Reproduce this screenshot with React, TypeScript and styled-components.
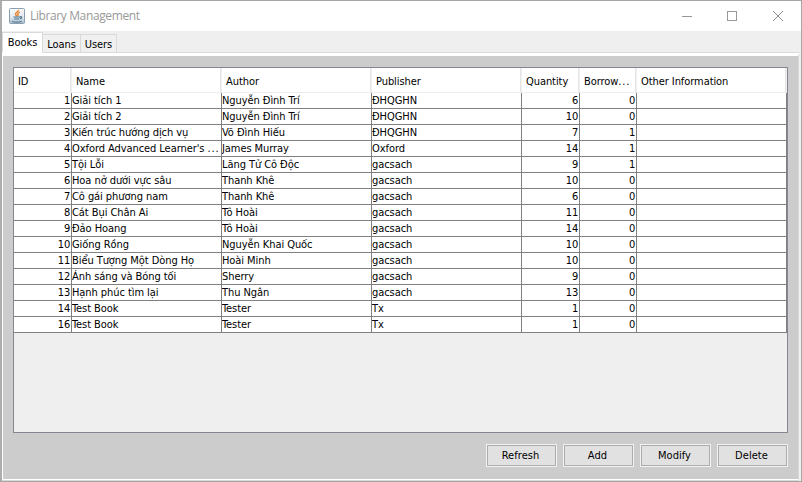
import React from "react";
import styled, { createGlobalStyle } from "styled-components";

const Global = createGlobalStyle`
  * { box-sizing: border-box; }
  body { margin: 0; background: #fff; }
`;

const Window = styled.div`
  width: 802px;
  height: 482px;
  display: flex;
  flex-direction: column;
  background: #efefef;
  border: 1px solid #a6a6a6;
  border-left: 2px solid #adadad;
  font: 11px/15px "DejaVu Sans Condensed", "DejaVu Sans", sans-serif;
  letter-spacing: -0.07px;
  color: #000;
  overflow: hidden;
`;

const TitleBar = styled.header`
  height: 30px;
  flex: none;
  display: flex;
  align-items: center;
  padding-left: 7px;
  background: #fff;
`;

const Title = styled.span`
  flex: 1;
  margin-left: 5px;
  font: 12px/16px "Open Sans", "Noto Sans", sans-serif;
  letter-spacing: -0.38px;
  color: #999;
`;

const WindowButton = styled.span`
  width: 46px;
  height: 30px;
  display: grid;
  place-items: center;
`;

const Tabs = styled.nav`
  height: 22px;
  flex: none;
  display: flex;
  align-items: flex-end;
  margin-right: 2px;
  box-shadow: inset 0 -1px #d9d9d9;
`;

const Tab = styled.span<{ $w: number; $active?: boolean }>`
  width: ${(p) => p.$w}px;
  height: ${(p) => (p.$active ? 21 : 19)}px;
  padding-top: 2px;
  text-align: center;
  white-space: nowrap;
  background: ${(p) => (p.$active ? "#fff" : "#f0f0f0")};
  border: 1px solid #d9d9d9;
  border-left-width: ${(p) => (p.$active ? 1 : 0)}px;
  border-bottom-color: ${(p) => (p.$active ? "#fff" : "#d9d9d9")};
`;

const TabPage = styled.main`
  flex: 1;
  margin: 0 2px 1px 0;
  border: 1px solid #fff;
  border-top-width: 3px;
  border-right-color: #d9d9d9;
  background: #ccc;
  box-shadow: 0 1px #d9d9d9;
  padding: 11px 10px 0;
  display: flex;
  flex-direction: column;
`;

const ScrollPane = styled.div`
  height: 366px;
  flex: none;
  border: 1px solid #828790;
  background: #efefef;
`;

const columns = "58px 150px 150px 150px 58px 57px 150px";

const HeaderRow = styled.div`
  display: grid;
  grid-template-columns: ${columns};
  height: 25px;
  background: #fff;
  border-bottom: 1px solid #ededed;
`;

const HeaderCell = styled.span`
  padding: 6px 0 0 4px;
  border-right: 1px solid #f0f0f0;
  box-shadow: inset -1px 0 #e5e5e5;
  white-space: nowrap;
`;

const Row = styled.div`
  display: grid;
  grid-template-columns: ${columns};
  height: 16px;
`;

const Cell = styled.span<{ $numeric?: boolean }>`
  padding-right: ${(p) => (p.$numeric ? 1 : 0)}px;
  border-right: 1px solid #808080;
  border-bottom: 1px solid #808080;
  background: #fff;
  text-align: ${(p) => (p.$numeric ? "right" : "left")};
  letter-spacing: ${(p) => (p.$numeric ? "-0.2px" : "inherit")};
  white-space: nowrap;
  overflow: hidden;
`;

const Dots = styled.span`
  letter-spacing: 0.9px;
`;

const Buttons = styled.div`
  display: flex;
  justify-content: flex-end;
  gap: 6px;
  margin-top: 11px;
`;

const Button = styled.button`
  width: 71px;
  height: 23px;
  padding: 0 2px 1px 0;
  border: 1px solid #f2f2f2;
  background: #e1e1e1;
  box-shadow: inset 0 0 0 1px #adadad;
  font: inherit;
  letter-spacing: 0.05px;
  color: #000;
`;

const JavaIcon = () => (
  <svg width="16" height="16" viewBox="0 0 16 16" fill="none">
    <defs>
      <linearGradient id="tile" x1="0" y1="0" x2="0" y2="1">
        <stop offset="0" stopColor="#fafbfc" />
        <stop offset="0.55" stopColor="#e3e9ee" />
        <stop offset="1" stopColor="#a9bccb" />
      </linearGradient>
    </defs>
    <rect x="0.5" y="0.5" width="15" height="15" rx="1" fill="url(#tile)" stroke="#8b9fb0" />
    <path d="M9.5 1.8C9.8 3.6 6.2 4.4 6.5 6.2c.1.9 1 1.4 1.2 2M10.8 4.2C9 5 8.2 5.7 9 6.8c.3.5.1 1-.4 1.5" stroke="#e8822f" strokeWidth="1.4" />
    <path d="M4.5 9h6.7M5.2 11h5M11.2 8.7c2-.5 2 1.7-.3 2.1" stroke="#44718f" strokeWidth="1.1" />
    <path d="M3 12.8c-.9 1.6 8.5 1.8 9.9.3" stroke="#44718f" strokeWidth="1" />
  </svg>
);

/** Shows a label, spreading out the dots of a truncated one. */
const Label = ({ text }: { text: string }) =>
  text.endsWith("...") ? <>{text.slice(0, -3)}<Dots>...</Dots></> : <>{text}</>;

const headers = ["ID", "Name", "Author", "Publisher", "Quantity", "Borrow...", "Other Information"];

const books = [
  ["1", "Giải tích 1", "Nguyễn Đình Trí", "ĐHQGHN", "6", "0"],
  ["2", "Giải tích 2", "Nguyễn Đình Trí", "ĐHQGHN", "10", "0"],
  ["3", "Kiến trúc hướng dịch vụ", "Võ Đình Hiếu", "ĐHQGHN", "7", "1"],
  ["4", "Oxford Advanced Learner's ...", "James Murray", "Oxford", "14", "1"],
  ["5", "Tội Lỗi", "Lãng Tử Cô Độc", "gacsach", "9", "1"],
  ["6", "Hoa nở dưới vực sâu", "Thanh Khê", "gacsach", "10", "0"],
  ["7", "Cô gái phương nam", "Thanh Khê", "gacsach", "6", "0"],
  ["8", "Cát Bụi Chân Ai", "Tô Hoài", "gacsach", "11", "0"],
  ["9", "Đảo Hoang", "Tô Hoài", "gacsach", "14", "0"],
  ["10", "Giống Rồng", "Nguyễn Khai Quốc", "gacsach", "10", "0"],
  ["11", "Biểu Tượng Một Dòng Họ", "Hoài Minh", "gacsach", "10", "0"],
  ["12", "Ánh sáng và Bóng tối", "Sherry", "gacsach", "9", "0"],
  ["13", "Hạnh phúc tìm lại", "Thu Ngân", "gacsach", "13", "0"],
  ["14", "Test Book", "Tester", "Tx", "1", "0"],
  ["16", "Test Book", "Tester", "Tx", "1", "0"],
];

export default function App() {
  return (
    <Window>
      <Global />
      <TitleBar>
        <JavaIcon />
        <Title>Library Management</Title>
        <WindowButton>
          <svg width="12" height="12" stroke="#999"><path d="M2 6.5h10" /></svg>
        </WindowButton>
        <WindowButton>
          <svg width="12" height="12" stroke="#999" fill="none"><rect x="1.5" y="1.5" width="9" height="9" /></svg>
        </WindowButton>
        <WindowButton>
          <svg width="12" height="12" stroke="#8c8c8c"><path d="M1 1l10 10M11 1L1 11" /></svg>
        </WindowButton>
      </TitleBar>
      <Tabs>
        <Tab $w={41} $active>Books</Tab>
        <Tab $w={38}>Loans</Tab>
        <Tab $w={36}>Users</Tab>
      </Tabs>
      <TabPage>
        <ScrollPane>
          <HeaderRow>
            {headers.map((h) => <HeaderCell key={h}><Label text={h} /></HeaderCell>)}
          </HeaderRow>
          {books.map((book) => (
            <Row key={book[0]}>
              {book.map((value, i) => (
                <Cell key={i} $numeric={i === 0 || i > 3}><Label text={value} /></Cell>
              ))}
              <Cell />
            </Row>
          ))}
        </ScrollPane>
        <Buttons>
          {["Refresh", "Add", "Modify", "Delete"].map((label) => (
            <Button key={label}>{label}</Button>
          ))}
        </Buttons>
      </TabPage>
    </Window>
  );
}
